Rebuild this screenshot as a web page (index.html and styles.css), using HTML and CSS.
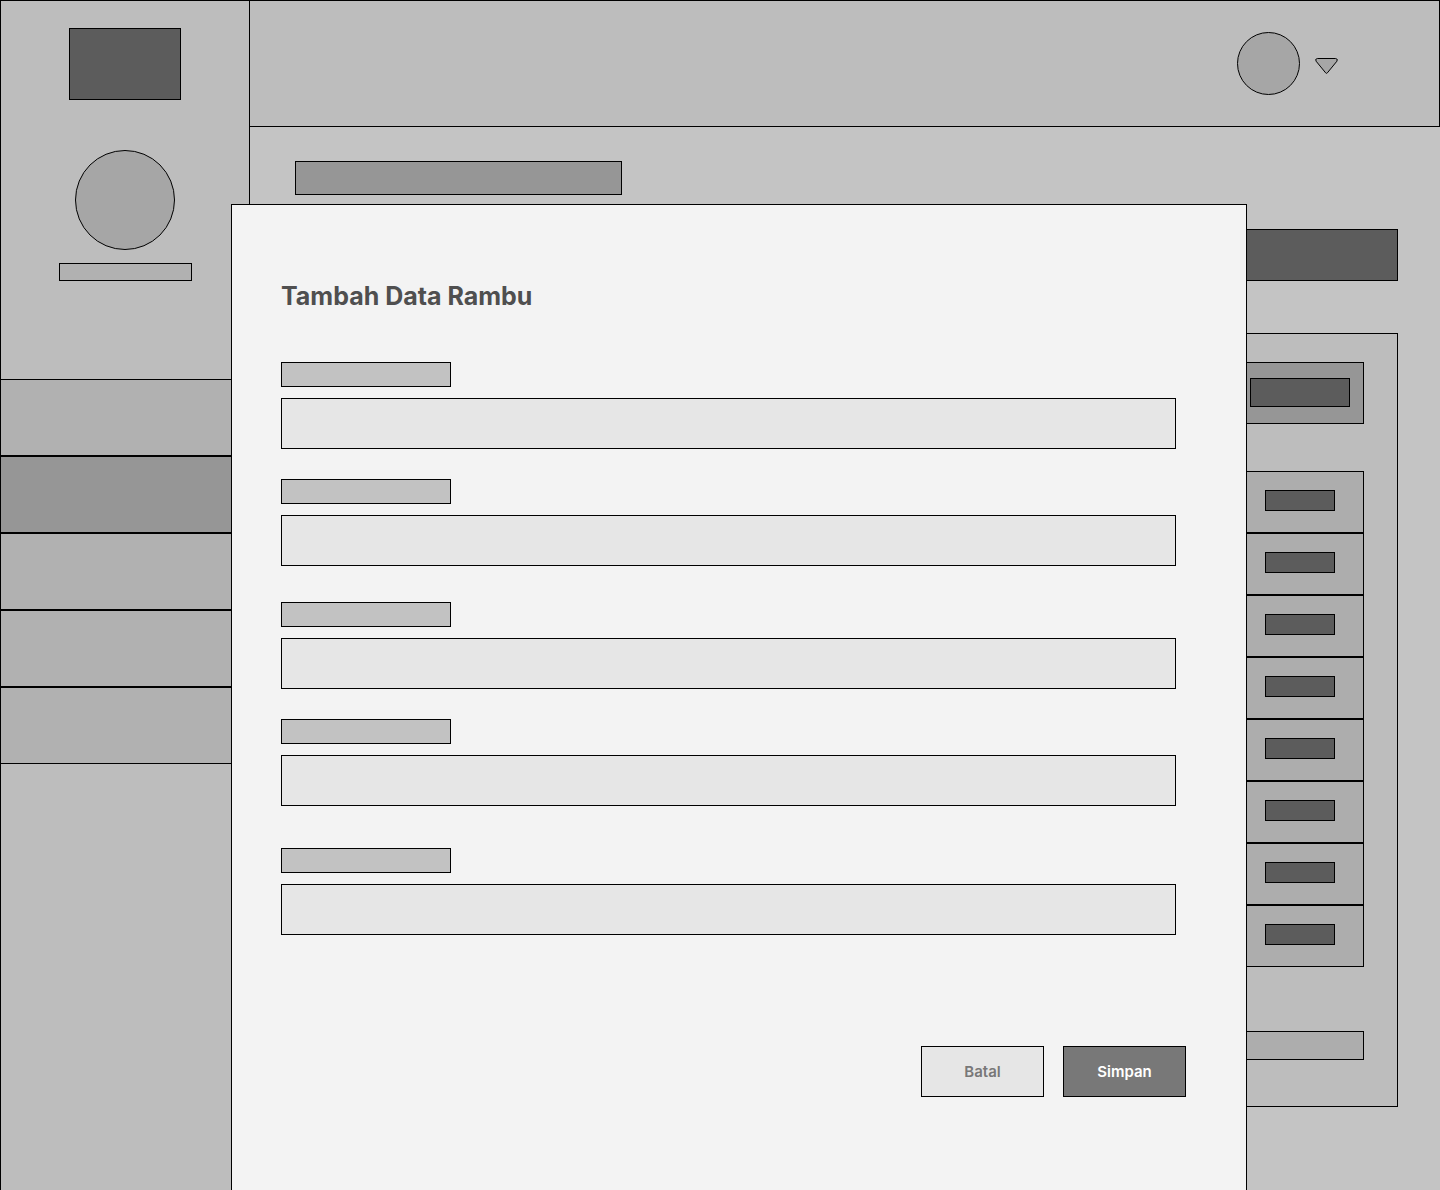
FILE: index.html
```html
<!DOCTYPE html>
<html lang="id">
<head>
<meta charset="utf-8">
<meta name="viewport" content="width=device-width, initial-scale=1">
<title>Tambah Data Rambu</title>
<link rel="stylesheet" href="styles.css">
</head>
<body>
<div class="page">
  <aside class="sidebar">
    <div class="logo"></div>
    <div class="profile-photo"></div>
    <div class="profile-name"></div>
    <nav class="menu">
      <a class="menu-item" href="#"></a>
      <a class="menu-item menu-item-active" href="#"></a>
      <a class="menu-item" href="#"></a>
      <a class="menu-item" href="#"></a>
      <a class="menu-item" href="#"></a>
    </nav>
  </aside>

  <div class="content">
    <header class="topbar">
      <button class="account" type="button">
        <span class="account-photo"></span>
        <svg class="account-arrow" viewBox="0 0 23 21" aria-hidden="true">
          <path d="M2.4 5.5H20.6Q23.3 5.9 21.9 8.2L12.4 19.8Q11.5 20.9 10.6 19.8L1.1 8.2Q-.3 5.9 2.4 5.5Z"/>
        </svg>
      </button>
    </header>

    <main class="main">
      <div class="heading"></div>
      <button class="add-button" type="button"></button>
      <section class="panel">
        <div class="toolbar"><button class="toolbar-button" type="button"></button></div>
        <ul class="rows">
          <li class="row"><button class="row-button" type="button"></button></li>
          <li class="row"><button class="row-button" type="button"></button></li>
          <li class="row"><button class="row-button" type="button"></button></li>
          <li class="row"><button class="row-button" type="button"></button></li>
          <li class="row"><button class="row-button" type="button"></button></li>
          <li class="row"><button class="row-button" type="button"></button></li>
          <li class="row"><button class="row-button" type="button"></button></li>
          <li class="row"><button class="row-button" type="button"></button></li>
        </ul>
        <div class="pager"></div>
      </section>
    </main>
  </div>

  <div class="overlay">
    <form class="modal" role="dialog" aria-labelledby="modal-title">
      <h1 class="modal-title" id="modal-title">Tambah Data Rambu</h1>
      <div class="fields">
        <div class="field">
          <label class="field-label" for="field-1"></label>
          <input class="field-input" id="field-1" type="text">
        </div>
        <div class="field">
          <label class="field-label" for="field-2"></label>
          <input class="field-input" id="field-2" type="text">
        </div>
        <div class="field field-spaced">
          <label class="field-label" for="field-3"></label>
          <input class="field-input" id="field-3" type="text">
        </div>
        <div class="field">
          <label class="field-label" for="field-4"></label>
          <input class="field-input" id="field-4" type="text">
        </div>
        <div class="field field-last">
          <label class="field-label" for="field-5"></label>
          <input class="field-input" id="field-5" type="text">
        </div>
      </div>
      <div class="actions">
        <button class="action action-cancel" type="button">Batal</button>
        <button class="action action-save" type="submit">Simpan</button>
      </div>
    </form>
  </div>
</div>
</body>
</html>
```

FILE: styles.css
```css
*,
*::before,
*::after {
  box-sizing: border-box;
}

body {
  margin: 0;
  background: #c4c4c4;
  font-family: Inter, "Liberation Sans", sans-serif;
}

button,
input {
  margin: 0;
  padding: 0;
  border: 1px solid #000;
  border-radius: 0;
  font: inherit;
}

.page {
  position: relative;
  display: flex;
  min-height: 100vh;
}

/* Sidebar */

.sidebar {
  display: flex;
  flex: none;
  flex-direction: column;
  align-items: center;
  width: 250px;
  padding-top: 27px;
  border: 1px solid #000;
  border-bottom: 0;
  background: #bdbdbd;
}

.logo {
  width: 112px;
  height: 72px;
  border: 1px solid #000;
  background: #5c5c5c;
}

.profile-photo {
  width: 100px;
  height: 100px;
  margin-top: 50px;
  border: 1px solid #000;
  border-radius: 50%;
  background: #a6a6a6;
}

.profile-name {
  width: 133px;
  height: 18px;
  margin-top: 13px;
  border: 1px solid #000;
  background: #b1b1b1;
}

.menu {
  align-self: stretch;
  margin-top: 98px;
}

.menu-item {
  display: block;
  height: 77px;
  border: solid #000;
  border-width: 1px 0;
  background: #b1b1b1;
}

.menu-item-active {
  background: #969696;
}

/* Top bar */

.content {
  flex: 1;
  min-width: 0;
}

.topbar {
  display: flex;
  align-items: center;
  justify-content: flex-end;
  height: 127px;
  padding-right: 101px;
  border: 1px solid #000;
  border-left: 0;
  background: #bdbdbd;
}

.account {
  display: flex;
  align-items: center;
  gap: 15px;
  border: 0;
  background: none;
}

.account-photo {
  width: 63px;
  height: 63px;
  border: 1px solid #000;
  border-radius: 50%;
  background: #a6a6a6;
}

.account-arrow {
  width: 23px;
  height: 21px;
  fill: #a6a6a6;
  stroke: #000;
}

/* Page behind the dialog */

.main {
  display: flex;
  flex-direction: column;
  padding: 34px 42px 83px 45px;
}

.heading {
  width: 327px;
  height: 34px;
  border: 1px solid #000;
  background: #969696;
}

.add-button {
  align-self: flex-end;
  width: 200px;
  height: 52px;
  margin-top: 34px;
  background: #5c5c5c;
}

.panel {
  margin-top: 52px;
  padding: 28px 33px 46px;
  border: 1px solid #000;
  background: #bdbdbd;
}

.toolbar,
.row {
  display: flex;
  justify-content: flex-end;
  height: 62px;
  border: 1px solid #000;
}

.toolbar {
  padding: 15px 13px;
  background: #969696;
}

.toolbar-button {
  width: 100px;
  height: 29px;
  background: #5c5c5c;
}

.rows {
  margin: 47px 0 64px;
  padding: 0;
  list-style: none;
}

.row {
  padding: 18px 28px;
  background: #adadad;
}

.row-button {
  width: 70px;
  height: 21px;
  background: #5c5c5c;
}

.pager {
  height: 29px;
  border: 1px solid #000;
  background: #adadad;
}

/* Dialog */

.overlay {
  position: absolute;
  inset: 0;
  display: flex;
  padding: 204px 193px 0 231px;
}

.modal {
  flex: 1;
  min-width: 0;
  padding: 75px 60px 0 49px;
  border: 1px solid #000;
  border-bottom: 0;
  background: #f3f3f3;
}

.modal-title {
  margin: 0 0 50px;
  color: #4f4f4f;
  font-size: 25px;
  font-weight: 700;
  line-height: 32px;
}

.fields {
  display: flex;
  flex-direction: column;
  gap: 30px;
  padding-right: 10px;
}

.field {
  display: flex;
  flex-direction: column;
  gap: 11px;
}

.field-spaced {
  margin-top: 6px;
}

.field-last {
  margin-top: 12px;
}

.field-label {
  width: 170px;
  height: 25px;
  border: 1px solid #000;
  background: #c2c2c2;
}

.field-input {
  width: 100%;
  height: 51px;
  padding: 0 16px;
  background: #e6e6e6;
}

.actions {
  display: flex;
  justify-content: flex-end;
  gap: 19px;
  margin-top: 111px;
}

.action {
  width: 123px;
  height: 51px;
  font-size: 15px;
  font-weight: 600;
}

.action-cancel {
  background: #e6e6e6;
  color: #787878;
}

.action-save {
  background: #787878;
  color: #fff;
}
```
